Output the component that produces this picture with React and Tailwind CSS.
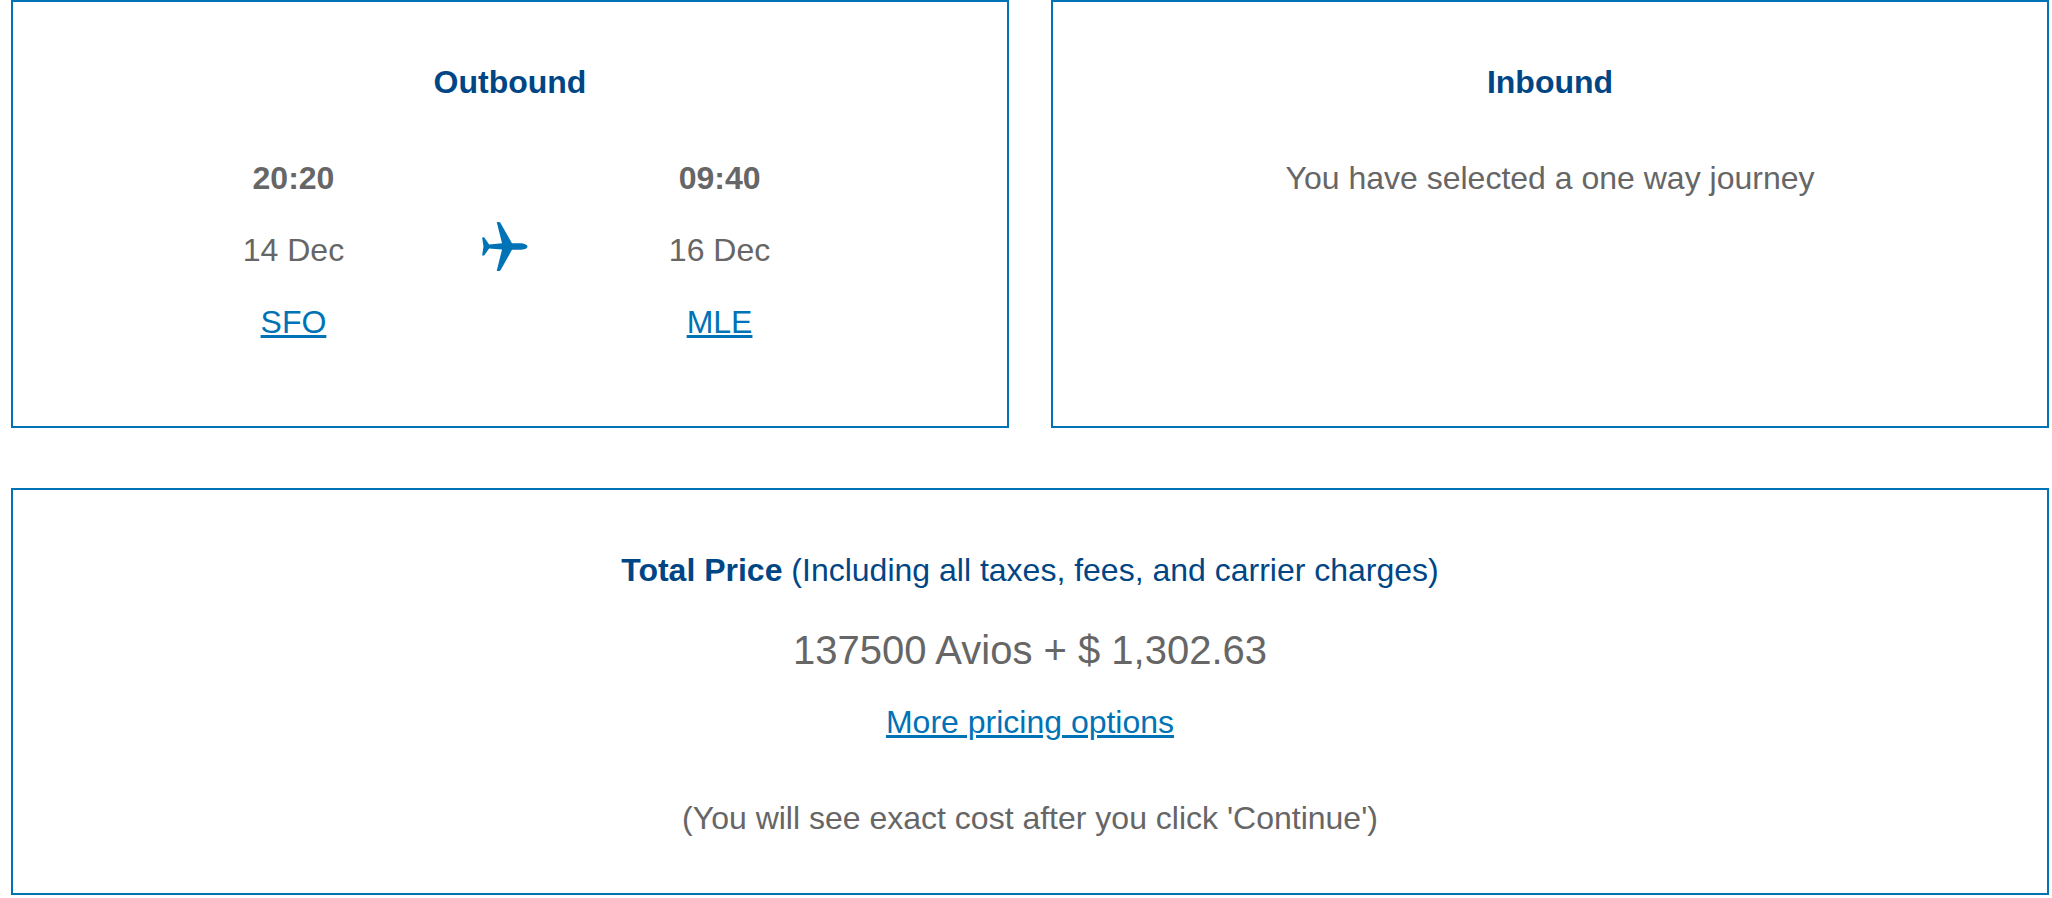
const linkClass =
  "text-[#0072b6] underline decoration-[3px] underline-offset-2";

function Stop({ time, date, code }) {
  return (
    <div className="flex flex-col items-center gap-8 whitespace-nowrap">
      <p className="font-bold">{time}</p>
      <p>{date}</p>
      <a href="#" className={linkClass}>
        {code}
      </a>
    </div>
  );
}

function Plane() {
  return (
    <svg
      viewBox="37 33 138 148"
      className="h-[49px] w-[46px]"
      fill="#0072b6"
      aria-hidden="true"
    >
      <path d="M81 33 L91 34 L127 97 L150 97 C163 97 174 101 174 107 C174 113 163 117 150 117 L127 117 L93 178 L89 181 L81 181 L97 116 L58 113 L43 134 L37 134 L41 107 L37 80 L43 79 L58 101 L97 97 Z" />
    </svg>
  );
}

export default function App() {
  return (
    <main className="flex flex-col gap-[60px] pl-[11px] pr-[3px] pb-[3px] text-center font-['Liberation_Sans',Arial,sans-serif] text-[32px] leading-10 text-[#666666]">
      <div className="grid grid-cols-2 gap-[42px]">
        <section className="flex flex-col gap-14 border-2 border-[#0072b6] pt-[60px] pb-[84px]">
          <h2 className="font-bold text-[#004685]">Outbound</h2>
          <div className="grid grid-cols-3 pr-[18.2%] pl-[17.5%]">
            <Stop time="20:20" date="14 Dec" code="SFO" />
            <div className="flex items-center justify-center pr-1 pb-2">
              <Plane />
            </div>
            <Stop time="09:40" date="16 Dec" code="MLE" />
          </div>
        </section>
        <section className="flex flex-col gap-14 border-2 border-[#0072b6] pt-[60px] pb-[84px]">
          <h2 className="font-bold text-[#004685]">Inbound</h2>
          <p>You have selected a one way journey</p>
        </section>
      </div>
      <section className="flex flex-col items-center border-2 border-[#0072b6] pt-[60px] pb-[55px]">
        <h2 className="text-[#004685]">
          <strong className="font-bold">Total Price</strong> (Including all
          taxes, fees, and carrier charges)
        </h2>
        <p className="mt-9 text-[40px] leading-12">137500 Avios + $ 1,302.63</p>
        <a href="#" className={`mt-7 ${linkClass}`}>
          More pricing options
        </a>
        <p className="mt-14">
          (You will see exact cost after you click &#39;Continue&#39;)
        </p>
      </section>
    </main>
  );
}
